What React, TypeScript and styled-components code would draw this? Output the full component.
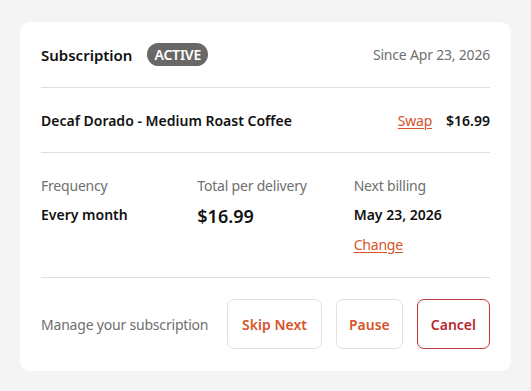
import React from "react";
import styled, { createGlobalStyle } from "styled-components";

const Global = createGlobalStyle`
  html, body { margin: 0; padding: 0; background: #f4f4f4; }
  body { font-family: "Noto Sans", "Open Sans", sans-serif; color: #111; }
`;

const Page = styled.div`
  padding: 22px 20px 21px 20px;
`;

const Card = styled.div`
  background: #fff;
  border-radius: 10px;
  padding: 0 21px;
`;

const Section = styled.div<{ $pt: number; $pb: number; $last?: boolean }>`
  padding: ${(p) => p.$pt}px 0 ${(p) => p.$pb}px;
  border-bottom: ${(p) => (p.$last ? "none" : "1px solid #dedede")};
`;

const Row = styled.div`
  display: flex;
  align-items: center;
  justify-content: space-between;
`;

const Left = styled.div`
  display: flex;
  align-items: center;
  gap: 15px;
`;

const Title = styled.span`
  font-size: 15px;
  font-weight: 600;
`;

const Badge = styled.span`
  background: #6a6867;
  color: #fff;
  font-size: 14px;
  font-weight: 600;
  border-radius: 12px;
  padding: 2px 7px;
  line-height: 19px;
  letter-spacing: -0.2px;
`;

const Muted = styled.span`
  color: #6f6f6f;
  font-size: 14px;
  letter-spacing: -0.2px;
`;

const Product = styled.span`
  font-size: 14px;
  font-weight: 600;
`;

const Right = styled.div`
  display: flex;
  align-items: center;
  gap: 14px;
`;

const Link = styled.a`
  color: #d6552a;
  font-size: 14px;
  text-decoration: underline;
  text-underline-offset: 2px;
  text-decoration-thickness: 1px;
  cursor: pointer;
  letter-spacing: -0.2px;
`;

const Price = styled.span`
  font-size: 14px;
  font-weight: 600;
`;

const Grid = styled.div`
  display: grid;
  grid-template-columns: 1fr 1fr 1fr;
  column-gap: 20px;
`;

const Col = styled.div`
  display: flex;
  flex-direction: column;
  align-items: flex-start;
`;

const Label = styled.div`
  color: #6f6f6f;
  font-size: 14px;
  line-height: 20px;
  letter-spacing: -0.2px;
`;

const Value = styled.div<{ $big?: boolean }>`
  font-size: ${(p) => (p.$big ? "18px" : "14px")};
  font-weight: 600;
  line-height: ${(p) => (p.$big ? "26px" : "20px")};
  margin-top: ${(p) => (p.$big ? "7px" : "9px")};
`;

const ChangeLink = styled(Link)`
  margin-top: 10px;
  line-height: 20px;
`;

const Actions = styled.div`
  display: flex;
  align-items: center;
  gap: 14px;
`;

const Button = styled.button<{ $danger?: boolean }>`
  height: 50px;
  padding: 0 ${(p) => (p.$danger ? "13px" : "14px")};
  background: #fff;
  border-radius: 7px;
  border: 1px solid ${(p) => (p.$danger ? "#c0353a" : "#e0e0e0")};
  color: ${(p) => (p.$danger ? "#b8292f" : "#d6552a")};
  font-family: inherit;
  font-size: 14px;
  font-weight: 600;
  cursor: pointer;
`;

const PauseButton = styled(Button)`
  padding: 0 12px;
`;

export default function App() {
  return (
    <>
      <Global />
      <Page>
        <Card>
          <Section $pt={21} $pb={21}>
            <Row>
              <Left>
                <Title>Subscription</Title>
                <Badge>ACTIVE</Badge>
              </Left>
              <Muted>Since Apr 23, 2026</Muted>
            </Row>
          </Section>
          <Section $pt={23} $pb={22}>
            <Row>
              <Product>Decaf Dorado - Medium Roast Coffee</Product>
              <Right>
                <Link>Swap</Link>
                <Price>$16.99</Price>
              </Right>
            </Row>
          </Section>
          <Section $pt={23} $pb={22}>
            <Grid>
              <Col>
                <Label>Frequency</Label>
                <Value>Every month</Value>
              </Col>
              <Col>
                <Label>Total per delivery</Label>
                <Value $big>$16.99</Value>
              </Col>
              <Col>
                <Label>Next billing</Label>
                <Value>May 23, 2026</Value>
                <ChangeLink>Change</ChangeLink>
              </Col>
            </Grid>
          </Section>
          <Section $pt={21} $pb={22} $last>
            <Row>
              <Muted>Manage your subscription</Muted>
              <Actions>
                <Button>Skip Next</Button>
                <PauseButton>Pause</PauseButton>
                <Button $danger>Cancel</Button>
              </Actions>
            </Row>
          </Section>
        </Card>
      </Page>
    </>
  );
}
